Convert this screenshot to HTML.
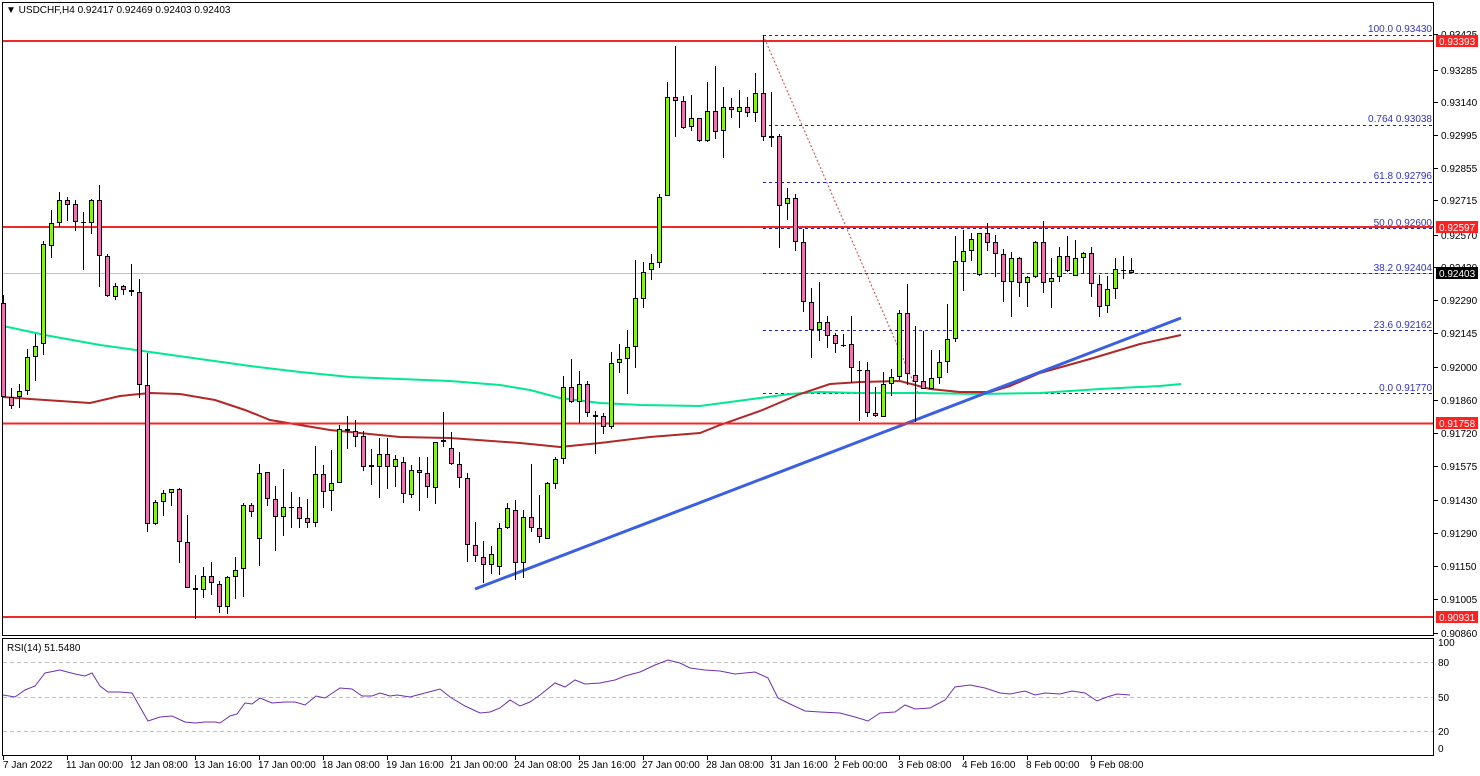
<!DOCTYPE html>
<html><head><meta charset="utf-8"><style>
html,body{margin:0;padding:0;background:#fff;width:1480px;height:776px;overflow:hidden}
svg{display:block}
text{font-family:"Liberation Sans",sans-serif;font-size:10px}
</style></head><body>
<svg id="s" width="1480" height="776" xmlns="http://www.w3.org/2000/svg">
<rect x="0" y="0" width="1480" height="776" fill="#fff"/>
<!-- frames -->
<rect x="2.5" y="2.5" width="1431" height="633" fill="none" stroke="#000"/>
<rect x="2.5" y="638.5" width="1431" height="117" fill="none" stroke="#000"/>
<!-- RSI levels -->
<g stroke="#c0c0c0" stroke-dasharray="4,3">
<line x1="3" y1="662.5" x2="1433" y2="662.5"/><line x1="3" y1="697.5" x2="1433" y2="697.5"/><line x1="3" y1="731.5" x2="1433" y2="731.5"/>
</g>
<!-- current price grey line -->
<line x1="3" y1="273.5" x2="1433" y2="273.5" stroke="#c0c0c0"/>
<!-- fib -->
<g stroke="#2020d0" stroke-dasharray="3,3">
<line x1="763" y1="35.5" x2="1433" y2="35.5"/><line x1="763" y1="125.5" x2="1433" y2="125.5"/><line x1="763" y1="182.5" x2="1433" y2="182.5"/><line x1="763" y1="228.5" x2="1433" y2="228.5"/><line x1="763" y1="273.5" x2="1433" y2="273.5"/><line x1="763" y1="330.5" x2="1433" y2="330.5"/><line x1="763" y1="393.5" x2="1433" y2="393.5"/>
</g>
<line x1="763" y1="35" x2="918" y2="393" stroke="#e04040" stroke-dasharray="2,2"/>
<g fill="#3030d0" text-anchor="end">
<text x="1432" y="32">100.0 0.93430</text><text x="1432" y="122">0.764 0.93038</text><text x="1432" y="179">61.8 0.92796</text><text x="1432" y="226">50.0 0.92600</text><text x="1432" y="271">38.2 0.92404</text><text x="1432" y="328">23.6 0.92162</text><text x="1432" y="391">0.0 0.91770</text>
</g>
<!-- MAs -->
<polyline fill="none" stroke="#00e890" stroke-width="2" points="3,326 50,336 100,345 150,352 200,359 250,366 300,372 350,377 450,381 500,385 530,390 560,398 600,403 640,405 700,406 730,402 760,398 790,394 820,392 860,393 920,393 980,394 1040,393 1100,389 1160,386 1181,384"/>
<polyline fill="none" stroke="#b02828" stroke-width="2" points="3,397 30,399 60,401 90,403 120,396 150,393 180,394 215,400 245,410 270,420 300,425 330,430 400,437 450,438 520,443 560,447 600,443 650,437 700,433 720,425 760,411 800,394 830,384 860,382 900,381 930,389 960,392 990,392 1010,386 1040,373 1090,359 1140,344 1181,335"/>
<!-- trend -->
<line x1="475" y1="589" x2="1181" y2="318" stroke="#3a5fe0" stroke-width="3"/>
<!-- red horizontals -->
<g stroke="#f02828" stroke-width="2">
<line x1="3" y1="41" x2="1433" y2="41"/><line x1="3" y1="227" x2="1433" y2="227"/><line x1="3" y1="423.5" x2="1433" y2="423.5"/><line x1="3" y1="617" x2="1433" y2="617"/>
</g>
<g id="c"></g>
<!-- RSI -->
<polyline fill="none" stroke="#7030b0" points="3,695 15,697 25,690 35,686 45,673 60,670 75,674 85,676 92,673 100,686 108,692 120,692 132,693 148,721 160,717 172,716 185,722 195,723 205,722 215,722 220,723 230,716 237,714 245,703 252,704 260,698 272,703 285,702 295,702 305,705 316,696 325,698 340,688 352,689 362,696 372,696 380,693 390,696 397,695 410,697 425,693 440,689 450,697 465,706 480,713 490,712 500,708 510,700 520,706 530,702 540,695 555,683 565,687 575,680 585,684 600,683 615,680 625,676 640,672 655,665 668,660 680,663 690,668 705,670 720,671 735,674 755,672 768,678 778,698 790,704 805,711 820,712 840,713 855,717 868,721 880,713 895,712 905,705 915,709 930,708 945,700 955,687 970,685 985,688 1000,693 1010,694 1025,691 1035,695 1045,693 1060,694 1072,691 1085,693 1097,701 1107,697 1117,694 1130,695"/>
<text x="7" y="651" fill="#000">RSI(14) 51.5480</text>
<text x="6" y="13" fill="#000">▼ USDCHF,H4  0.92417 0.92469 0.92403 0.92403</text>
<!-- price axis -->
<g id="ax" fill="#000"></g>
<g fill="#fff">
<rect x="1436" y="35" width="42" height="12" fill="#ff2020"/><text x="1439" y="45">0.93393</text>
<rect x="1436" y="221" width="42" height="12" fill="#ff2020"/><text x="1439" y="231">0.92597</text>
<rect x="1436" y="267" width="42" height="12" fill="#000"/><text x="1439" y="277">0.92403</text>
<rect x="1436" y="417" width="42" height="12" fill="#ff2020"/><text x="1439" y="427">0.91758</text>
<rect x="1436" y="611" width="42" height="12" fill="#ff2020"/><text x="1439" y="621">0.90931</text>
</g>
<g fill="#000">
<text x="1438" y="646">100</text><text x="1438" y="666">80</text><text x="1438" y="701">50</text><text x="1438" y="735">20</text><text x="1438" y="752">0</text>
</g>
<g id="tm" fill="#000"></g>
</svg>
<script>
var D=[
[295,303,397,397,'r'],[388,397,406,409,'r'],[384,391,397,408,'g'],[349,357,391,395,'g'],[334,346,357,381,'g'],[241,244,344,355,'g'],[210,223,246,258,'g'],[192,200,223,227,'g'],[197,200,205,221,'r'],[200,204,222,231,'r'],
[212,222,222,270,'d'],[199,200,223,234,'g'],[185,200,256,287,'r'],[254,256,296,297,'r'],[283,286,297,300,'g'],[285,286,290,295,'r'],[264,290,292,296,'r'],[279,292,385,398,'r'],[353,385,524,532,'r'],[500,502,524,525,'g'],
[490,493,502,516,'g'],[489,489,493,506,'g'],[488,489,542,563,'r'],[515,542,588,588,'r'],[575,588,590,619,'r'],[567,576,590,598,'g'],[562,576,583,595,'r'],[581,584,607,613,'r'],[576,577,607,614,'g'],[557,570,577,599,'g'],
[503,505,569,597,'g'],[503,505,512,517,'r'],[464,473,539,566,'g'],[472,472,499,506,'r'],[486,499,517,551,'r'],[469,507,517,536,'g'],[492,507,507,528,'d'],[497,507,519,528,'r'],[499,518,523,528,'r'],[446,474,523,527,'g'],
[465,474,492,508,'r'],[450,483,491,511,'g'],[425,429,483,483,'g'],[416,429,431,449,'r'],[420,431,437,447,'r'],[431,436,467,471,'r'],[449,465,467,485,'g'],[438,454,467,498,'g'],[438,454,467,489,'r'],[455,459,467,487,'g'],
[457,462,494,503,'r'],[465,470,495,498,'g'],[457,470,473,511,'r'],[457,473,487,498,'r'],[442,442,488,504,'g'],[412,440,442,447,'g'],[432,448,464,465,'r'],[452,464,478,488,'r'],[473,478,545,562,'r'],[522,545,556,562,'r'],
[541,557,565,583,'r'],[546,554,565,574,'g'],[523,528,567,575,'g'],[503,508,528,529,'g'],[500,510,563,580,'r'],[510,517,563,578,'g'],[464,517,528,532,'r'],[495,528,537,543,'r'],[482,483,539,539,'g'],[457,459,484,489,'g'],
[376,387,459,464,'g'],[359,387,402,403,'r'],[371,384,402,423,'g'],[381,384,413,417,'r'],[411,415,417,454,'g'],[413,416,427,434,'r'],[352,363,427,429,'g'],[344,359,363,373,'g'],[330,347,359,394,'g'],[260,298,347,368,'g'],
[262,272,299,308,'g'],[254,263,270,280,'g'],[194,197,263,268,'g'],[82,97,196,196,'g'],[46,97,101,137,'r'],[96,101,128,129,'r'],[95,118,127,131,'g'],[118,118,141,142,'r'],[82,111,141,142,'g'],[66,111,132,139,'r'],
[87,107,131,158,'g'],[98,107,110,118,'r'],[90,107,112,128,'g'],[97,107,113,117,'r'],[73,93,113,122,'g'],[35,93,137,141,'r'],[92,136,137,147,'g'],[134,136,206,248,'r'],[188,198,204,220,'g'],[194,198,242,251,'r'],
[229,242,302,312,'r'],[288,302,330,358,'r'],[282,322,330,341,'g'],[316,322,336,348,'r'],[333,335,344,353,'r'],[334,345,345,347,'d'],[316,344,368,383,'r'],[361,370,370,421,'d'],[362,370,413,417,'r'],[387,413,416,417,'r'],
[372,384,417,417,'g'],[369,377,384,396,'g'],[310,313,377,380,'g'],[284,313,374,385,'r'],[326,375,382,422,'r'],[331,381,389,389,'r'],[350,378,389,389,'g'],[350,362,378,384,'g'],[304,339,362,373,'g'],[236,261,339,342,'g'],
[230,251,262,291,'g'],[233,239,251,261,'g'],[233,233,275,276,'g'],[223,233,243,251,'r'],[235,242,254,277,'r'],[249,254,282,302,'r'],[252,258,282,317,'g'],[257,258,283,297,'r'],[276,277,283,307,'g'],[241,242,277,278,'g'],
[221,242,283,293,'r'],[258,278,282,308,'g'],[247,256,277,282,'g'],[236,256,271,272,'r'],[240,258,276,276,'g'],[252,253,258,274,'g'],[247,253,284,297,'r'],[275,284,307,317,'r'],[276,289,306,313,'g'],[258,269,289,299,'g'],
[256,270,270,279,'d'],[258,270,273,273,'r']];
var s='',NS='';
for(var k=0;k<D.length;k++){var d=D[k],x=3+8*k;
s+='<line x1="'+(x+.5)+'" y1="'+d[0]+'" x2="'+(x+.5)+'" y2="'+d[3]+'" stroke="#000"/>';
if(d[4]=='d'){s+='<line x1="'+(x-2)+'" y1="'+(d[1]+.5)+'" x2="'+(x+3)+'" y2="'+(d[1]+.5)+'" stroke="#000"/>';}
else{var h=Math.max(d[2]-d[1],2);s+='<rect x="'+(x-1.5)+'" y="'+(d[1]+.5)+'" width="4" height="'+(h-1)+'" fill="'+(d[4]=='g'?'#7cfc00':'#ff69b4')+'" stroke="#000"/>';}}
document.getElementById('c').innerHTML=s;
var A=[['0.93425',34],['0.93285',70],['0.93140',102],['0.92995',135],['0.92855',168],['0.92715',200],['0.92570',235],['0.92430',267],['0.92290',300],['0.92145',333],['0.92000',367],['0.91860',400],['0.91720',433],['0.91575',466],['0.91430',500],['0.91290',533],['0.91150',566],['0.91005',599],['0.90860',633]];
var a='';A.forEach(function(p){a+='<line x1="1434" y1="'+(p[1]+.5)+'" x2="1438" y2="'+(p[1]+.5)+'" stroke="#000"/><text x="1441" y="'+(p[1]+4)+'">'+p[0]+'</text>';});
document.getElementById('ax').innerHTML=a;
var T=['7 Jan 2022','11 Jan 00:00','12 Jan 08:00','13 Jan 16:00','17 Jan 00:00','18 Jan 08:00','19 Jan 16:00','21 Jan 00:00','24 Jan 08:00','25 Jan 16:00','27 Jan 00:00','28 Jan 08:00','31 Jan 16:00','2 Feb 00:00','3 Feb 08:00','4 Feb 16:00','8 Feb 00:00','9 Feb 08:00'];
var t='';T.forEach(function(l,i){var x=3+64*i;t+='<line x1="'+(x+.5)+'" y1="756" x2="'+(x+.5)+'" y2="760" stroke="#000"/><text x="'+(x+(i?-1:0))+'" y="768">'+l+'</text>';});
document.getElementById('tm').innerHTML=t;
</script>
</body></html>
